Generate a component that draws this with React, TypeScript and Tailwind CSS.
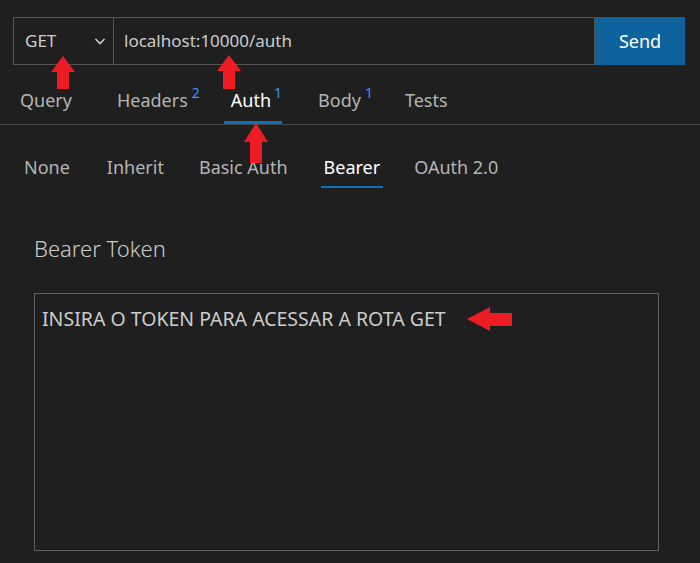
import React from "react";

function UpArrow({ className, h, head }: { className: string; h: number; head: number }) {
  return (
    <svg className={className} width={24} height={h} viewBox={`0 0 24 ${h}`}>
      <polygon points={`12,0 24,${head} 18,${head} 18,${h} 6,${h} 6,${head} 0,${head}`} fill="#ed1c24" />
    </svg>
  );
}

export default function App() {
  const font = { fontFamily: '"Noto Sans", "Open Sans", sans-serif' };
  return (
    <div className="relative w-[700px] h-[563px] bg-[#1f1f1f] overflow-hidden" style={font}>
      {/* URL bar */}
      <div className="flex pt-[17px] pl-[13px]">
        <div className="flex h-[48px] w-[582px] border border-[#555555]">
          <div className="flex w-[100px] items-center justify-between border-r border-[#555555] pl-[11px] pr-[6px] text-[17px] text-[#cccccc]">
            <span>GET</span>
            <svg width="14" height="14" viewBox="0 0 14 14">
              <path d="M2.5 5 L7 9.5 L11.5 5" stroke="#cccccc" strokeWidth="1.6" fill="none" />
            </svg>
          </div>
          <div className="flex items-center pl-[10px] text-[17px] text-[#cccccc]">localhost:10000/auth</div>
        </div>
        <button className="h-[48px] w-[90px] bg-[#0e639c] text-[18px] text-white">Send</button>
      </div>

      {/* Tabs */}
      <div className="flex h-[60px] items-end border-b border-[#474747] pl-[13px] text-[18px] leading-[25px] text-[#b4b4b4]">
        <div className="flex border-b-[3px] border-transparent px-[7px] pb-[8px]">Query</div>
        <div className="ml-[31px] flex border-b-[3px] border-transparent px-[7px] pb-[8px]">
          Headers<span className="ml-[4px] -mt-[3px] text-[14px] leading-[16px] text-[#3794ff]">2</span>
        </div>
        <div className="ml-[17px] flex border-b-[3px] border-[#0e70c0] pl-[7px] pr-0 pb-[8px] text-white">
          Auth<span className="ml-[3px] -mt-[3px] text-[14px] leading-[16px] text-[#3794ff]">1</span>
        </div>
        <div className="ml-[29px] flex border-b-[3px] border-transparent px-[7px] pb-[8px]">
          Body<span className="ml-[4px] -mt-[3px] text-[14px] leading-[16px] text-[#3794ff]">1</span>
        </div>
        <div className="ml-[18px] flex border-b-[3px] border-transparent px-[7px] pb-[8px]">Tests</div>
      </div>

      {/* Sub tabs */}
      <div className="flex h-[63px] items-end pl-[21px] text-[18px] leading-[25px] text-[#b4b4b4]">
        <div className="border-b-[2px] border-transparent px-[3px] pb-[6px]">None</div>
        <div className="ml-[31px] border-b-[2px] border-transparent px-[3px] pb-[6px]">Inherit</div>
        <div className="ml-[29px] border-b-[2px] border-transparent px-[3px] pb-[6px]">Basic Auth</div>
        <div className="ml-[30px] border-b-[2px] border-[#0e70c0] px-[3px] pb-[6px] text-white">Bearer</div>
        <div className="ml-[28px] border-b-[2px] border-transparent px-[3px] pb-[6px]">OAuth 2.0</div>
      </div>

      {/* Bearer token */}
      <div className="pl-[34px] pt-[45px] text-[22px] leading-[30px] font-light text-[#cccccc]">Bearer Token</div>
      <div className="ml-[34px] mt-[30px] h-[258px] w-[625px] border border-[#5f5f5f] px-[7px] pt-[11px] text-[19.5px] leading-[27px] text-[#cccccc]">
        INSIRA O TOKEN PARA ACESSAR A ROTA GET
      </div>

      {/* Annotation arrows */}
      <UpArrow className="absolute left-[51px] top-[56px]" h={33} head={16} />
      <UpArrow className="absolute left-[217px] top-[55px]" h={34} head={16} />
      <UpArrow className="absolute left-[244px] top-[123px]" h={40} head={19} />
      <svg className="absolute left-[467px] top-[307px]" width="45" height="24" viewBox="0 0 45 24">
        <polygon points="0,12 23,0 23,6 45,6 45,19 23,19 23,24" fill="#ed1c24" />
      </svg>
    </div>
  );
}
